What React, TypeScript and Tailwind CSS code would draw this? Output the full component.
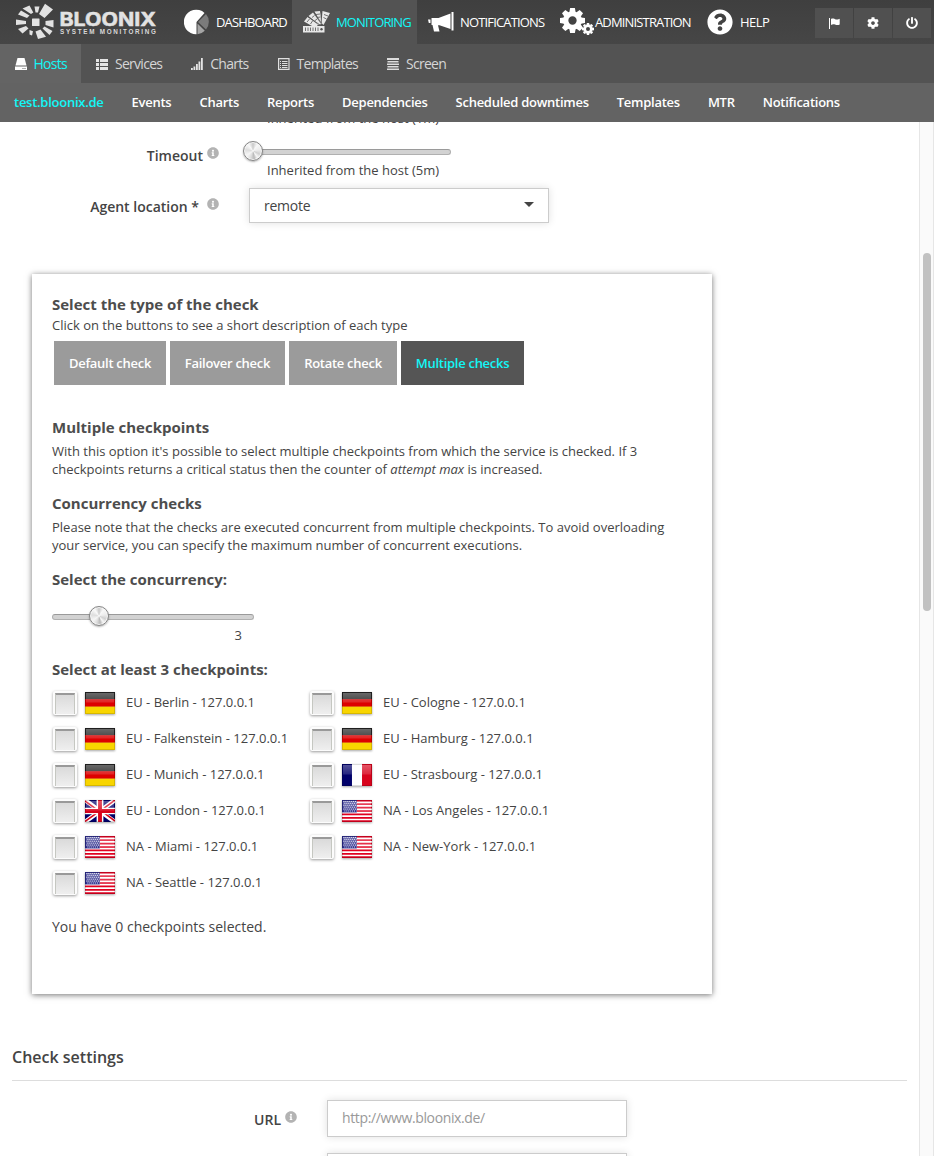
import type { ReactNode } from "react";
import { FaCog, FaInfoCircle, FaPowerOff, FaQuestionCircle } from "react-icons/fa";

function Logo() {
  return (
    <svg className="block h-[44px] w-[176px] shrink-0" viewBox="0 0 176 44">
      <g fill="#e2e2e2">
        <rect x="32" y="18.500" width="7.500" height="7.500" rx="0.5" />
        <path d="M45 3.800 53 9.500 44.500 18 42.500 16.500 39 14Z" />
        <path d="M34.500 6.500H39.500L38 12.500H35.500Z" />
        <path d="M22.500 8.500 29.500 5.500 33.300 12.500 31 14Z" />
        <path d="M18 14.500 21 10.500 29.500 15.500 27 18Z" />
        <path d="M16 19.500 26 21 26 24 16 25Z" />
        <path d="M18 29 26 26 28.500 28.500 22.500 33.500Z" />
        <path d="M29.500 30 33 31.300 32 35.500 29.500 34.500Z" />
        <path d="M35.500 31.500 40.500 29.500 46 36.800 38 39Z" />
        <path d="M42.500 28.500 44.500 26.500 52.500 31 49.500 35Z" />
        <path d="M45.500 21 53.500 20 53.500 27.500 45.500 25Z" />
      </g>
      <text x="59.500" y="25.500" textLength="96.500" lengthAdjust="spacingAndGlyphs" fill="#e2e2e2" stroke="#e2e2e2" strokeWidth="0.5" className="font-['Inter',sans-serif] text-[18.500px] font-bold">BLOONIX</text>
      <text x="60" y="33.500" textLength="96" lengthAdjust="spacing" fill="#d8d8d8" className="font-['Liberation_Sans',sans-serif] text-[6.300px] font-bold">SYSTEM MONITORING</text>
    </svg>
  );
}

function PieIcon() {
  return (
    <svg className="block size-[26px]" viewBox="0 0 26 26">
      <path d="M12.500 13V25.300A12.300 12.300 0 1 1 20.500 4Z" fill="#fff" />
      <path d="M14 13 22 5A12 12 0 0 1 22 20.500Z" fill="#7b7b7b" />
      <path d="M13.500 14.500 20.800 21.800A12 12 0 0 1 13.500 25.300Z" fill="#a5a5a5" />
    </svg>
  );
}

function SwatchIcon() {
  return (
    <svg className="block h-[24px] w-[28px]" viewBox="0 0 28 24">
      <g fill="#e8e8e8">
        <path d="M1 11.500 4.500 7 15 14.500 14 16H9Z" />
        <path d="M5.500 6 10 2.500 18 14 16 15Z" />
        <path d="M11.500 1.500 17 1 19 13 18 14Z" />
        <path d="M19.500 1 27 3 20.500 15 18.500 13Z" />
        <path d="M0 16H21.500V22.500H0Z" />
      </g>
      <g stroke="#535353" strokeWidth="0.8" fill="none">
        <path d="M4 12 6.500 9M7.500 14 9.500 11M9 7.500 11.500 5.500M11.500 11 14 9M13 4.500 17 4M14 7.500 17.500 7M21 4.500 25 6M20.500 7.500 23.500 9M2.500 17.500V21M5 17.500V21M7.500 17.500V21M10 17.500V21M12.500 17.500V21M15 17.500V21M5 6.500 17 15M11 2 18.500 13.500M18.300 1V13" />
      </g>
      <circle cx="18.500" cy="19.200" r="1.200" fill="#535353" />
    </svg>
  );
}

function HornIcon() {
  return (
    <svg className="block h-[22px] w-[26px]" viewBox="0 0 26 22">
      <path d="M23.500 1H25.500V19.500H23.500Z M22.500 2.500V18L11.500 14.200H10L11.500 20.500H6L4.500 14H3.500V7H10.500ZM0 8.500H2.500V12H0.800Z" fill="#fff" />
    </svg>
  );
}

function GearsIcon() {
  return (
    <span className="relative block h-[28px] w-[34px] shrink-0">
      <Gear className="absolute left-0 top-0 size-[25px]" hole={4} />
      <Gear className="absolute left-[22px] top-[15px] size-[12px]" hole={4} />
    </span>
  );
}

const teeth = [0, 45, 90, 135, 180, 225, 270, 315];

function Gear({ className, hole }: { className: string; hole: number }) {
  return (
    <svg className={className} viewBox="-12 -12 24 24">
      <circle r={(9 + hole) / 2} fill="none" stroke="#fff" strokeWidth={9 - hole} />
      {teeth.map((a) => (
        <path key={a} d="M-3 -8 -2.300 -12H2.300L3 -8Z" fill="#fff" transform={`rotate(${a})`} />
      ))}
    </svg>
  );
}

function FlagIcon() {
  return (
    <svg className="block h-[11px] w-[11px]" viewBox="0 0 11 11">
      <path d="M0 0H1V11H0ZM2 1C4 0 5.500 1.200 7 1.500 8.500 1.800 10 1 10.700 .8V6.500C9 7.500 7.500 7 6 6.500 4.500 6 3 6.300 2 7Z" fill="#fff" />
    </svg>
  );
}

const subIcons: Record<string, ReactNode> = {
  Hosts: (
    <>
      <path d="M2.500 0H9.500L11.500 7.500H.5Z" fill="#fff" />
      <path d="M0 8.500H12V12H0Z" fill="#fff" />
      <path d="M7.500 10H8.500V11H7.500ZM9.500 10H10.500V11H9.500Z" fill="#666" />
    </>
  ),
  Services: <path d="M0 1H3V4H0ZM4 1H12V4H4ZM0 5H3V8H0ZM4 5H12V8H4ZM0 9H3V12H0ZM4 9H12V12H4Z" fill="#e5e5e5" />,
  Charts: <path d="M0 10H1.800V12H0ZM2.500 8.500H4.300V12H2.500ZM5 6H6.800V12H5ZM7.500 3.500H9.300V12H7.500ZM10 0H11.800V12H10Z" fill="#e5e5e5" />,
  Templates: (
    <>
      <path d="M.6 .6H11V11.400H.6Z" fill="none" stroke="#e0e0e0" strokeWidth="1.200" />
      <path d="M2 3H3V4H2ZM4 3H9.500V4H4ZM2 5H3V6H2ZM4 5H9.500V6H4ZM2 7H3V8H2ZM4 7H9.500V8H4ZM2 9H3V10H2ZM4 9H9.500V10H4Z" fill="#e0e0e0" />
    </>
  ),
  Screen: <path d="M0 0H12V2H0ZM.5 3H11.500V4.500H.5ZM0 5.500H12V7H0ZM.5 8H11.500V9.500H.5ZM0 10.500H12V12H0Z" fill="#dcdcdc" />,
};

function Info() {
  return <FaInfoCircle className="size-[12px] shrink-0 text-[#b3b3b3]" />;
}

function Slider({ className, knob }: { className: string; knob: string }) {
  return (
    <div className={`relative h-[6px] rounded-full border border-[#b0b0b0] border-t-[#9a9a9a] bg-[#d2d2d2] ${className}`}>
      <span className={`absolute -top-[9px] size-[20px] rounded-full border border-[#858585] bg-[conic-gradient(#c9c9c9,#f8f8f8_35deg,#ececec_80deg,#d0d0d0_115deg,#f7f7f7_145deg,#b9b9b9_170deg,#dedede_200deg,#f6f6f6_235deg,#dddddd_280deg,#fafafa_325deg,#c9c9c9)] shadow-[0_1px_2px_rgba(0,0,0,0.3),inset_0_0_0_1px_#f6f6f6] ${knob}`} />
    </div>
  );
}

function FlagPicture({ code }: { code: string }) {
  return (
    <svg className="relative -top-[0.5px] ml-[8px] block h-[22px] w-[30px] shrink-0 drop-shadow-[0_1px_1px_rgba(0,0,0,0.35)]" viewBox="0 0 31 23" preserveAspectRatio="none">
      <defs>
        <linearGradient id="gloss" x1="0" y1="0" x2="0" y2="1">
          <stop offset="0" stopColor="#fff" stopOpacity="0.32" />
          <stop offset="1" stopColor="#fff" stopOpacity="0.14" />
        </linearGradient>
      </defs>
      {code === "de" && (
        <>
          <path d="M0 0H31V8H0Z" fill="#222" />
          <path d="M0 7.500H31V15.500H0Z" fill="#dd0000" />
          <path d="M0 15.300H31V23H0Z" fill="#f8d500" />
        </>
      )}
      {code === "fr" && (
        <>
          <path d="M0 0H11V23H0Z" fill="#00006a" />
          <path d="M10.300 0H20.700V23H10.300Z" fill="#fff" />
          <path d="M20.700 0H31V23H20.700Z" fill="#d8031c" />
        </>
      )}
      {code === "gb" && (
        <>
          <path d="M0 0H31V23H0Z" fill="#00006a" />
          <path d="M0 0 31 23M31 0 0 23" stroke="#fff" strokeWidth="4.500" />
          <path d="M0 1 13 10.500M31 0 18 9.700M0 22.500 12 13.700M31 22 19 13" stroke="#d8031c" strokeWidth="1.600" />
          <path d="M15.500 0V23M0 11.500H31" stroke="#fff" strokeWidth="7" />
          <path d="M15.500 0V23M0 11.500H31" stroke="#d8031c" strokeWidth="4" />
        </>
      )}
      {code === "us" && (
        <>
          <path d="M0 0H31V23H0Z" fill="#fff" />
          <path d="M0 .9H31M0 4.400H31M0 8H31M0 11.500H31M0 15H31M0 18.600H31M0 22.100H31" stroke="#e00020" strokeWidth="1.800" />
          <path d="M0 0H15.300V13H0Z" fill="#28288a" />
          <path d="M1.500 1.500H15M2.500 3.500H15M1.500 5.500H15M2.500 7.500H15M1.500 9.500H15M2.500 11.500H15" stroke="#fff" strokeWidth="1" strokeDasharray="1 1" />
        </>
      )}
      <path d="M1 1H30V11H1Z" fill="url(#gloss)" />
      <path d="M.5 .5H30.500V22.500H.5Z" fill="none" stroke="#000" strokeOpacity="0.15" />
    </svg>
  );
}

const checkpoints = [
  ["de", "EU - Berlin - 127.0.0.1"],
  ["de", "EU - Cologne - 127.0.0.1"],
  ["de", "EU - Falkenstein - 127.0.0.1"],
  ["de", "EU - Hamburg - 127.0.0.1"],
  ["de", "EU - Munich - 127.0.0.1"],
  ["fr", "EU - Strasbourg - 127.0.0.1"],
  ["gb", "EU - London - 127.0.0.1"],
  ["us", "NA - Los Angeles - 127.0.0.1"],
  ["us", "NA - Miami - 127.0.0.1"],
  ["us", "NA - New-York - 127.0.0.1"],
  ["us", "NA - Seattle - 127.0.0.1"],
];

const hostTabs = ["test.bloonix.de", "Events", "Charts", "Reports", "Dependencies", "Scheduled downtimes", "Templates", "MTR", "Notifications"];

function Heading({ children, className = "" }: { children: ReactNode; className?: string }) {
  return <h3 className={`h-[20px] text-[15px] leading-[20px] font-bold text-[#4d4d4d] ${className}`}>{children}</h3>;
}

function TopBar() {
  return (
    <header className="shrink-0 text-white">
      <div className="flex h-[44px] bg-linear-to-b from-[#3f3f3f] to-[#464646] text-[13px]">
        <Logo />
        <nav className="flex h-full leading-[42px] tracking-[-0.85px]">
          <a className="flex w-[116px] items-center pl-[8px]"><PieIcon /><span className="ml-[6px]">DASHBOARD</span></a>
          <a className="flex w-[125px] items-center bg-[#535353] pl-[11px] text-[#12f7f7]"><SwatchIcon /><span className="ml-[5px]">MONITORING</span></a>
          <a className="flex w-[135px] items-center pl-[11px]"><HornIcon /><span className="ml-[6px]">NOTIFICATIONS</span></a>
          <a className="flex w-[145px] items-center pl-[8px]"><GearsIcon /><span className="ml-[1px]">ADMINISTRATION</span></a>
          <a className="flex w-[80px] items-center pl-[10px]"><FaQuestionCircle className="size-[26px] shrink-0" /><span className="ml-[7px] tracking-[-0.5px]">HELP</span></a>
        </nav>
        <div className="ml-[38px] flex gap-px pt-[8px]">
          <span className="flex h-[30px] w-[38px] items-center justify-center bg-[#505050]"><FlagIcon /></span>
          <span className="flex h-[30px] w-[38px] items-center justify-center bg-[#505050]"><FaCog className="size-[12px]" /></span>
          <span className="flex h-[30px] w-[38px] items-center justify-center bg-[#505050]"><FaPowerOff className="size-[12px]" /></span>
        </div>
      </div>
      <nav className="flex h-[39px] bg-[#535353] text-[14px] text-[#d6d6d6]">
        {Object.keys(subIcons).map((name) => (
          <a key={name} className={`flex items-center px-[14.500px] ${name === "Hosts" ? "bg-[#646464] text-[#12f7f7]" : ""}`}>
            <svg className="block size-[12px] shrink-0" viewBox="0 0 12 12">{subIcons[name]}</svg>
            <span className="ml-[7px] tracking-[-0.72px]">{name}</span>
          </a>
        ))}
      </nav>
      <nav className="flex h-[39px] items-center bg-[#636363] text-[13px] font-semibold tracking-[-0.26px]">
        {hostTabs.map((name, i) => (
          <a key={name} className={`px-[14px] ${i === 0 ? "text-[#12f7f7]" : ""}`}>{name}</a>
        ))}
      </nav>
    </header>
  );
}

function CheckCard() {
  return (
    <section className="ml-[32px] mt-[51px] h-[720px] w-[680px] bg-white px-[20px] pt-[20px] shadow-[0_1px_6px_rgba(0,0,0,0.55)]">
      <Heading>Select the type of the check</Heading>
      <p className="mt-[2px] leading-[18px]">Click on the buttons to see a short description of each type</p>
      <div className="ml-[2px] mt-[7px] flex h-[44px] gap-[4px] font-semibold tracking-[-0.28px] text-white">
        <button className="w-[112px] bg-[#9b9b9b] pt-[2px]">Default check</button>
        <button className="w-[115px] bg-[#9b9b9b] pt-[2px]">Failover check</button>
        <button className="w-[108px] bg-[#9b9b9b] pt-[2px]">Rotate check</button>
        <button className="w-[123px] bg-[#555] pt-[2px] text-[#12f7f7]">Multiple checks</button>
      </div>
      <Heading className="mt-[32px]">Multiple checkpoints</Heading>
      <p className="mt-[5px] leading-[18px]">
        With this option it's possible to select multiple checkpoints from which the service is checked. If 3<br />
        checkpoints returns a critical status then the counter of <i>attempt max</i> is increased.
      </p>
      <Heading className="mt-[15px]">Concurrency checks</Heading>
      <p className="mt-[5px] leading-[18px]">
        Please note that the checks are executed concurrent from multiple checkpoints. To avoid overloading<br />
        your service, you can specify the maximum number of concurrent executions.
      </p>
      <Heading className="mt-[15px]">Select the concurrency:</Heading>
      <Slider className="mt-[25px] w-[202px]" knob="left-[36px]" />
      <p className="mt-[6px] w-[190px] text-right leading-[18px]">3</p>
      <Heading className="mt-[15px]">Select at least 3 checkpoints:</Heading>
      <div className="mt-[6px] grid grid-cols-[257px_257px]">
        {checkpoints.map(([code, label]) => (
          <label key={label} className="flex h-[36px] items-center">
            <span className="ml-px flex h-[24px] w-[24px] items-center justify-center rounded-[2px] bg-[#fcfcfc] shadow-[0_1px_3px_rgba(0,0,0,0.4)]">
              <span className="h-[21px] w-[20px] border-x border-t-2 border-[#c5c7c1] border-t-[#999] bg-linear-to-b from-[#dadada] to-[#efefef]" />
            </span>
            <FlagPicture code={code} />
            <span className="ml-[11px] whitespace-nowrap">{label}</span>
          </label>
        ))}
      </div>
      <p className="mt-[16px] text-[14px] leading-[20px]">You have 0 checkpoints selected.</p>
    </section>
  );
}

export default function App() {
  return (
    <div className="flex h-[1156px] w-[934px] flex-col overflow-hidden bg-white font-['Open_Sans',sans-serif] text-[13px] text-[#444]">
      <TopBar />
      <div className="flex min-h-0 flex-1">
        <main className="min-w-0 flex-1 overflow-hidden">
          <p className="-mt-[13px] h-[18px] pl-[267px] leading-[18px]">Inherited from the host (1m)</p>
          <div className="mt-[17px] flex h-[40px]">
            <div className="flex w-[219px] justify-end gap-[4px] text-[14px] leading-[20px] font-semibold">
              <span className="pt-[2px]">Timeout</span><span className="pt-[3px]"><Info /></span>
            </div>
            <div className="ml-[25px] pt-[5px]">
              <Slider className="w-[207px]" knob="-left-[2px]" />
              <p className="mt-[6px] pl-[23px] leading-[18px]">Inherited from the host (5m)</p>
            </div>
          </div>
          <div className="mt-[4px] flex h-[35px]">
            <div className="flex w-[219px] justify-end gap-[8px] text-[14px] leading-[20px] font-semibold">
              <span className="pt-[9px]">Agent location *</span><span className="pt-[10px]"><Info /></span>
            </div>
            <div className="ml-[30px] flex w-[300px] items-center justify-between border border-[#ccc] pl-[14px] pr-[14px] text-[14px] tracking-[-0.25px] shadow-[0_0_8px_rgba(0,0,0,0.12)]">
              <span>remote</span>
              <svg className="mb-[3px] block h-[5px] w-[10px]" viewBox="0 0 10 5"><path d="M0 0H10L5 5Z" fill="#444" /></svg>
            </div>
          </div>
          <CheckCard />
          <div className="ml-[12px] mt-[50px] h-[37px] w-[895px] border-b border-[#ddd]">
            <h2 className="pt-[2px] text-[16px] leading-[22px] font-semibold">Check settings</h2>
          </div>
          <div className="mt-[19px] flex h-[37px]">
            <div className="flex w-[297px] justify-end gap-[4px] text-[14px] leading-[20px] font-semibold">
              <span className="pt-[10px]">URL</span><span className="pt-[11px]"><Info /></span>
            </div>
            <div className="ml-[30px] flex w-[300px] items-center border border-[#ccc] pb-[2px] pl-[14px] text-[14px] tracking-[-0.37px] text-[#999] shadow-[0_0_8px_rgba(0,0,0,0.12)]">http://www.bloonix.de/</div>
          </div>
          <div className="ml-[327px] mt-[16px] h-[37px] w-[300px] border border-[#ccc] shadow-[0_0_8px_rgba(0,0,0,0.12)]" />
        </main>
        <div className="w-[15px] shrink-0 border-x border-[#e6e6e6] bg-[#fafafa] pt-[131px]">
          <div className="ml-[3px] h-[358px] w-[8px] rounded-full bg-[#c1c1c1]" />
        </div>
      </div>
    </div>
  );
}
